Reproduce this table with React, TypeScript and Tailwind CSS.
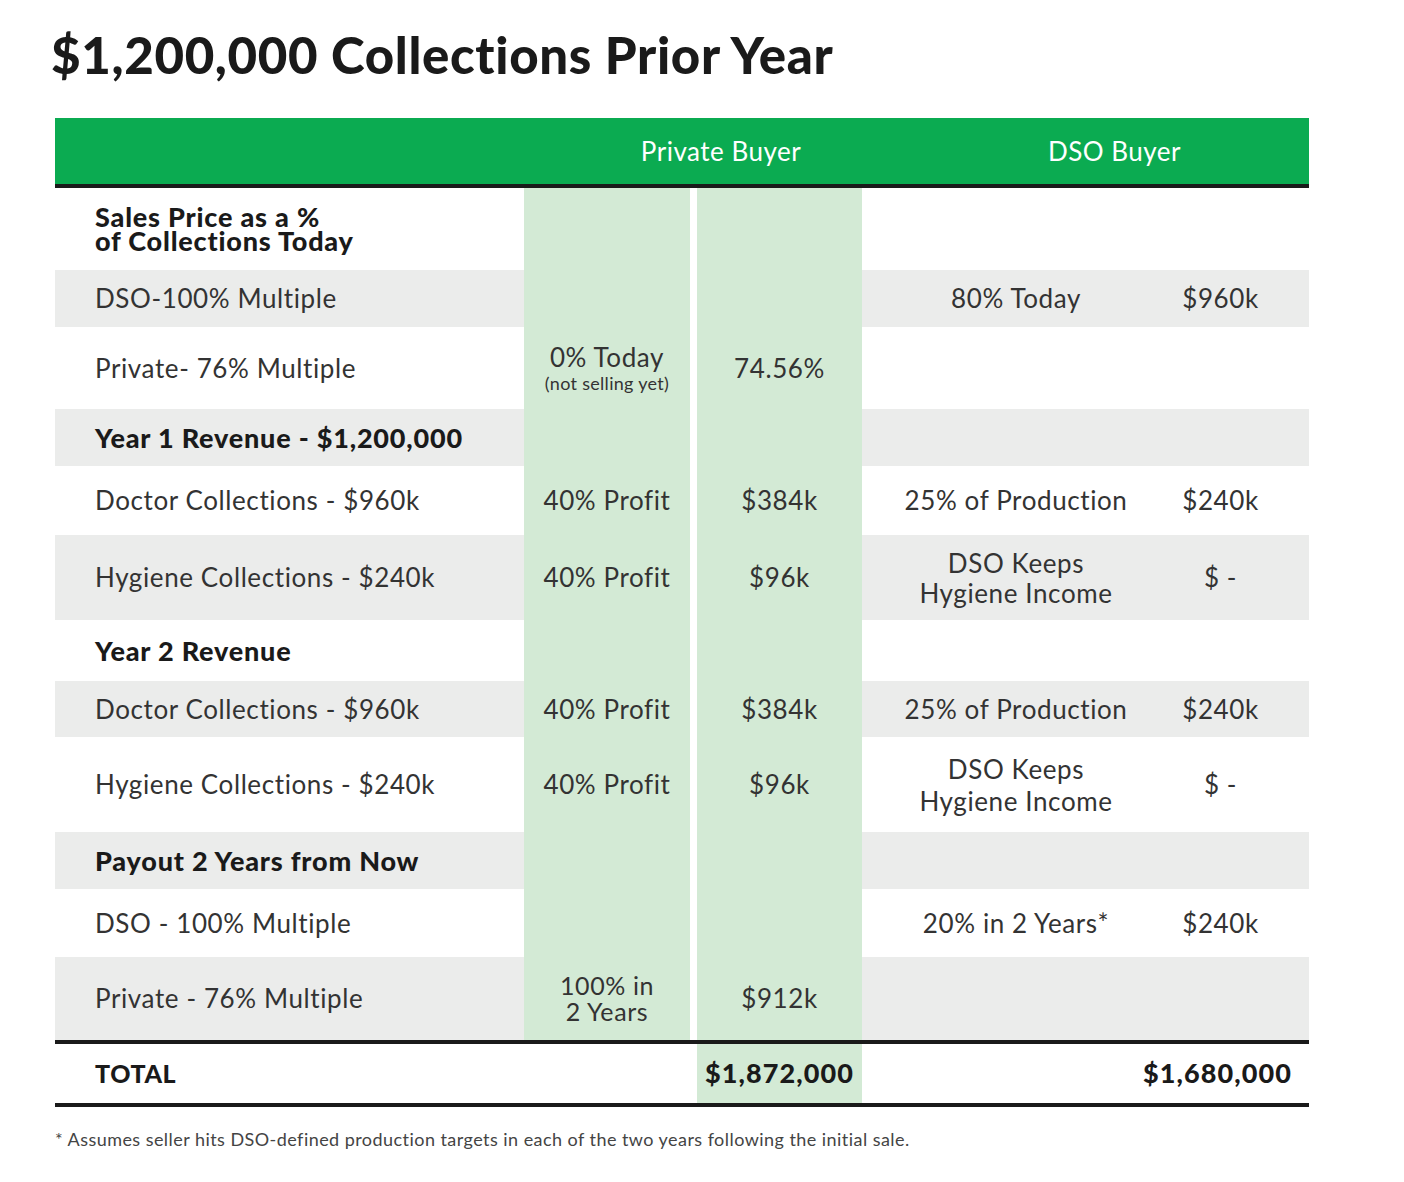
import React from "react";

type Row = {
  label: string;
  bold?: boolean;
  gray?: boolean;
  h: string;
  p1?: React.ReactNode;
  p2?: React.ReactNode;
  d1?: React.ReactNode;
  d2?: React.ReactNode;
};

const rows: Row[] = [
  { label: "Sales Price as a %\nof Collections Today", bold: true, h: "h-[82px]" },
  { label: "DSO-100% Multiple", gray: true, h: "h-[57px]", d1: "80% Today", d2: "$960k" },
  {
    label: "Private- 76% Multiple",
    h: "h-[82px]",
    p1: (
      <div className="flex flex-col items-center leading-none">
        <span>0% Today</span>
        <span className="text-[18px] tracking-[0.3px] mt-[4px]">(not selling yet)</span>
      </div>
    ),
    p2: "74.56%",
  },
  { label: "Year 1 Revenue - $1,200,000", bold: true, gray: true, h: "h-[57px]" },
  { label: "Doctor Collections - $960k", h: "h-[69px]", p1: "40% Profit", p2: "$384k", d1: "25% of Production", d2: "$240k" },
  {
    label: "Hygiene Collections - $240k",
    gray: true,
    h: "h-[85px]",
    p1: "40% Profit",
    p2: "$96k",
    d1: (
      <div className="leading-[30px] text-center">
        DSO Keeps
        <br />
        Hygiene Income
      </div>
    ),
    d2: "$ -",
  },
  { label: "Year 2 Revenue", bold: true, h: "h-[61px]" },
  { label: "Doctor Collections - $960k", gray: true, h: "h-[56px]", p1: "40% Profit", p2: "$384k", d1: "25% of Production", d2: "$240k" },
  {
    label: "Hygiene Collections - $240k",
    h: "h-[95px]",
    p1: "40% Profit",
    p2: "$96k",
    d1: (
      <div className="leading-[32px] text-center">
        DSO Keeps
        <br />
        Hygiene Income
      </div>
    ),
    d2: "$ -",
  },
  { label: "Payout 2 Years from Now", bold: true, gray: true, h: "h-[57px]" },
  { label: "DSO - 100% Multiple", h: "h-[68px]", d1: "20% in 2 Years*", d2: "$240k" },
  {
    label: "Private - 76% Multiple",
    gray: true,
    h: "h-[83px]",
    p1: (
      <div className="flex flex-col items-center leading-[25px] text-[25px]">
        <span>100% in</span>
        <span className="mt-[1px]">2 Years</span>
      </div>
    ),
    p2: "$912k",
  },
];

const App: React.FC = () => {
  return (
    <div className="w-[1404px] h-[1182px] bg-white pl-[55px] pt-[26px] text-[#333] font-['Lato',sans-serif]">
      <h1 className="text-[51px] font-black text-[#1a1a1a] leading-[58px] -ml-[4px] tracking-[0.65px]">
        $1,200,000 Collections Prior Year
      </h1>

      <div className="mt-[34px] w-[1254px]">
        <div className="h-[66px] bg-[#0bab51] flex items-center text-white text-[26px] tracking-[0.5px]">
          <div className="w-[469px]" />
          <div className="w-[338px] text-center pl-[56px]">Private Buyer</div>
          <div className="w-[447px] text-center pl-[58px]">DSO Buyer</div>
        </div>
        <div className="h-[4px] bg-[#1a1a1a]" />

        {rows.map((r, i) => (
          <div key={i} className={`flex ${r.h} text-[26px] tracking-[0.6px]`}>
            <div
              className={`w-[469px] flex items-center pl-[40px] whitespace-pre-line ${
                r.gray ? "bg-[#ebeceb]" : "bg-white"
              } ${r.bold ? "font-black text-[27px] tracking-[0.8px] text-[#1a1a1a] leading-[24px]" : ""}`}
            >
              {r.label}
            </div>
            <div className="w-[166px] bg-[#d3ead5] flex items-center justify-center">{r.p1}</div>
            <div className="w-[7px] bg-white" />
            <div className="w-[165px] bg-[#d3ead5] flex items-center justify-center">{r.p2}</div>
            <div className={`w-[306px] flex items-center justify-center pl-[2px] ${r.gray ? "bg-[#ebeceb]" : "bg-white"}`}>
              {r.d1}
            </div>
            <div className={`w-[141px] flex items-center justify-center pr-[36px] ${r.gray ? "bg-[#ebeceb]" : "bg-white"}`}>
              {r.d2}
            </div>
          </div>
        ))}

        <div className="h-[4px] bg-[#1a1a1a]" />
        <div className="flex h-[59px] text-[27px] font-black tracking-[1.1px] text-[#1a1a1a]">
          <div className="w-[642px] flex items-center pl-[40px] text-[25px] tracking-[0.6px]">TOTAL</div>
          <div className="w-[165px] bg-[#d3ead5] flex items-center justify-center">$1,872,000</div>
          <div className="flex-1 flex items-center justify-end pr-[17px]">$1,680,000</div>
        </div>
        <div className="h-[4px] bg-[#1a1a1a]" />
      </div>

      <p className="mt-[19px] text-[18px] text-[#444] tracking-[0.45px]">
        * Assumes seller hits DSO-defined production targets in each of the two years following the initial sale.
      </p>
    </div>
  );
};

export default App;
